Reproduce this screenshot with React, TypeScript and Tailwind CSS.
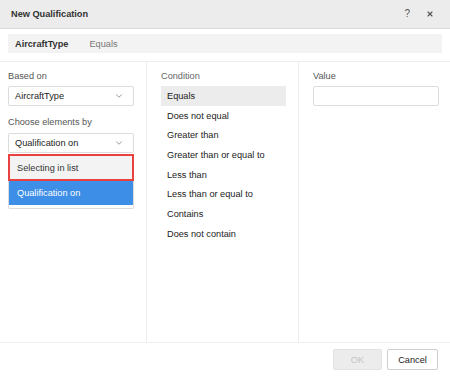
import { ChevronDown, X } from "lucide-react";

const conditions = [
  "Equals",
  "Does not equal",
  "Greater than",
  "Greater than or equal to",
  "Less than",
  "Less than or equal to",
  "Contains",
  "Does not contain",
];

function Select({ value }: { value: string }) {
  return (
    <div className="flex items-center justify-between h-[20px] border border-[#dcdcdc] rounded-[2px] bg-white pl-[6px] pr-[9px] text-[#222]">
      <span>{value}</span>
      <ChevronDown className="w-[10px] h-[10px] text-[#666]" strokeWidth={1.6} />
    </div>
  );
}

export default function App() {
  return (
    <div
      className="w-[450px] h-[381px] bg-white flex flex-col text-[9.2px] leading-[14px] text-[#222]"
      style={{ fontFamily: '"Liberation Sans", Arial, sans-serif' }}
    >
      {/* Header */}
      <div className="h-[29px] shrink-0 bg-[#ececec] border-b border-[#dadada] flex items-center justify-between pl-[11px] pr-[16px]">
        <span className="font-bold text-[#333]">New Qualification</span>
        <div className="flex items-center gap-[16px] text-[#555]">
          <span className="text-[10px]">?</span>
          <X className="w-[8px] h-[8px]" strokeWidth={3.5} />
        </div>
      </div>

      {/* Summary */}
      <div className="px-[8px] pt-[5px] pb-[8px] border-b border-[#eeeeee]">
        <div className="h-[19px] bg-[#f3f3f3] flex items-center pl-[7px] gap-[21px]">
          <span className="font-bold text-[#333]">AircraftType</span>
          <span className="text-[#777]">Equals</span>
        </div>
      </div>

      {/* Columns */}
      <div className="flex flex-1 border-b border-[#eeeeee]">
        <div className="w-[147px] border-r border-[#eeeeee] pl-[8px] pr-[12px] pt-[7px]">
          <div className="text-[#555] mb-[3px]">Based on</div>
          <Select value="AircraftType" />
          <div className="text-[#555] mt-[9px] mb-[4px]">Choose elements by</div>
          <Select value="Qualification on" />
          <div className="border border-[#dcdcdc] border-t-0 rounded-b-[2px] h-[55px] mt-[1px]">
            <div className="h-[27px] bg-[#f3f3f3] border-2 border-[#e8413f] flex items-center pl-[7px] text-[#333] -mx-px">
              Selecting in list
            </div>
            <div className="h-[24px] bg-[#3d8ee7] text-white flex items-center pl-[8px]">
              Qualification on
            </div>
          </div>
        </div>

        <div className="w-[152px] border-r border-[#eeeeee] pl-[14px] pr-[12px] pt-[7px]">
          <div className="text-[#666] mb-[3px]">Condition</div>
          <div className="flex flex-col">
            {conditions.map((c, i) => (
              <div
                key={c}
                className={`h-[19.7px] flex items-center pl-[6px] ${i === 0 ? "bg-[#ececec]" : ""}`}
              >
                {c}
              </div>
            ))}
          </div>
        </div>

        <div className="flex-1 pl-[14px] pr-[11px] pt-[7px]">
          <div className="text-[#555] mb-[3px]">Value</div>
          <div className="h-[20px] border border-[#dcdcdc] rounded-[2px] bg-white" />
        </div>
      </div>

      {/* Footer */}
      <div className="h-[38px] shrink-0 flex items-start justify-end gap-[5px] pt-[6px] pr-[12px]">
        <button className="w-[49px] h-[21px] bg-[#ececec] border border-[#e2e2e2] rounded-[2px] text-[#c4c4c4]">
          OK
        </button>
        <button className="w-[51px] h-[21px] bg-white border border-[#cfcfcf] rounded-[2px] text-[#222]">
          Cancel
        </button>
      </div>
    </div>
  );
}
